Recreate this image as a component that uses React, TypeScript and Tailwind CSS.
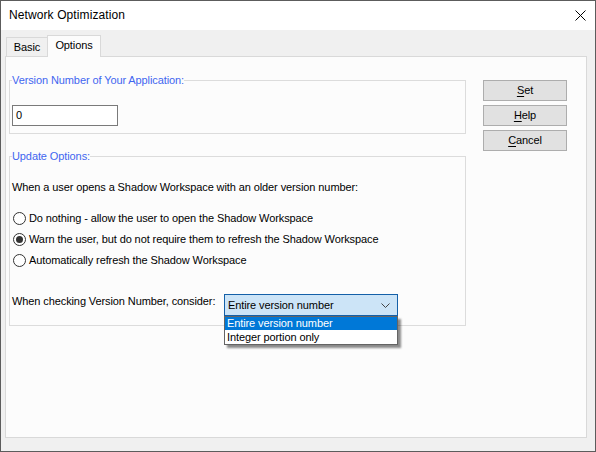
import React from 'react';

const FONT = { fontFamily: '"Liberation Sans", Arial, sans-serif' };

function Mnemonic({ text }: { text: string }) {
  return (
    <span>
      <span className="underline underline-offset-2">{text[0]}</span>
      {text.slice(1)}
    </span>
  );
}

function Radio({ checked, label }: { checked?: boolean; label: string }) {
  return (
    <div className="flex h-[21px] items-center">
      <span className="ml-[1px] flex h-[13px] w-[13px] items-center justify-center rounded-full border border-[#333333] bg-white">
        {checked && <span className="h-[7px] w-[7px] rounded-full bg-[#333333]" />}
      </span>
      <span className="ml-[3px]">{label}</span>
    </div>
  );
}

function GroupBox({ title, className, children }: { title: string; className: string; children: React.ReactNode }) {
  return (
    <div className={`relative border border-[#dcdcdc] ${className}`}>
      <span className="absolute -top-[7px] left-[2px] bg-[#fcfcfc] leading-[13px] text-[#3f66f0]">{title}</span>
      {children}
    </div>
  );
}

export default function App() {
  return (
    <div style={FONT} className="flex h-[452px] w-[596px] flex-col border border-[#5c5c5c] bg-[#f0f0f0] text-[11px] leading-[13px] tracking-[-0.1px] text-black">
      {/* Title bar */}
      <div className="flex h-[29px] items-center justify-between bg-white pl-2">
        <span className="text-[12px] tracking-[0.1px]">Network Optimization</span>
        <svg width="11" height="11" viewBox="0 0 11 11" className="mr-[9px]">
          <path d="M0.5 0.5 L10.5 10.5 M10.5 0.5 L0.5 10.5" stroke="#000" strokeWidth="1" />
        </svg>
      </div>

      <div className="pt-[5px]">
        {/* Tabs */}
        <div className="ml-[5px] flex h-[21px] items-start">
          <div className="mt-[2px] flex h-[19px] w-[42px] items-center justify-center border-l border-r border-t border-[#d9d9d9] bg-[#f0f0f0]">
            Basic
          </div>
          <div className="relative z-10 -ml-[1px] flex h-[22px] w-[54px] items-center justify-center border-l border-r border-t border-[#d9d9d9] bg-[#fcfcfc] pb-[2px]">
            Options
          </div>
        </div>

        {/* Panel */}
        <div className="ml-[4px] flex h-[382px] w-[582px] border border-[#d9d9d9] bg-[#fcfcfc] pl-[3px] pt-[23px]">
          <div className="flex w-[457px] flex-col">
            <GroupBox title="Version Number of Your Application:" className="h-[54px]">
              <div className="ml-[2px] mt-[24px] flex h-[21px] w-[106px] items-center border border-[#7a7a7a] bg-white pl-[3px]">
                0
              </div>
            </GroupBox>

            <GroupBox title="Update Options:" className="mt-[22px] h-[170px]">
              <div className="pl-[2px] pt-[24px]">
                <div>When a user opens a Shadow Workspace with an older version number:</div>
                <div className="mt-[14px]">
                  <Radio label="Do nothing - allow the user to open the Shadow Workspace" />
                  <Radio checked label="Warn the user, but do not require them to refresh the Shadow Workspace" />
                  <Radio label="Automatically refresh the Shadow Workspace" />
                </div>
                <div className="mt-[23px] flex items-start">
                  <span className="w-[212px] pt-[1px]">When checking Version Number, consider:</span>
                  <div className="relative">
                    <div className="flex h-[22px] w-[174px] items-center justify-between border border-[#1460a8] bg-[#cce4f7] pl-[3px] pr-[7px]">
                      <span>Entire version number</span>
                      <svg width="9" height="5" viewBox="0 0 9 5">
                        <path d="M0.5 0.5 L4.5 4.5 L8.5 0.5" fill="none" stroke="#444" strokeWidth="1" />
                      </svg>
                    </div>
                    {/* Open list */}
                    <div className="absolute left-0 top-full z-20 w-[174px] border border-[#646464] bg-white shadow-[3px_3px_2px_rgba(0,0,0,0.45)]">
                      <div className="flex h-[13px] items-center bg-[#0078d7] pl-[2px] text-white">Entire version number</div>
                      <div className="flex h-[14px] items-center pl-[2px]">Integer portion only</div>
                    </div>
                  </div>
                </div>
              </div>
            </GroupBox>
          </div>

          {/* Buttons */}
          <div className="ml-[17px] flex flex-col gap-[4px]">
            {['Set', 'Help', 'Cancel'].map((b) => (
              <button key={b} className="flex h-[21px] w-[84px] items-center justify-center border border-[#adadad] bg-[#e1e1e1]">
                <Mnemonic text={b} />
              </button>
            ))}
          </div>
        </div>
      </div>
    </div>
  );
}
